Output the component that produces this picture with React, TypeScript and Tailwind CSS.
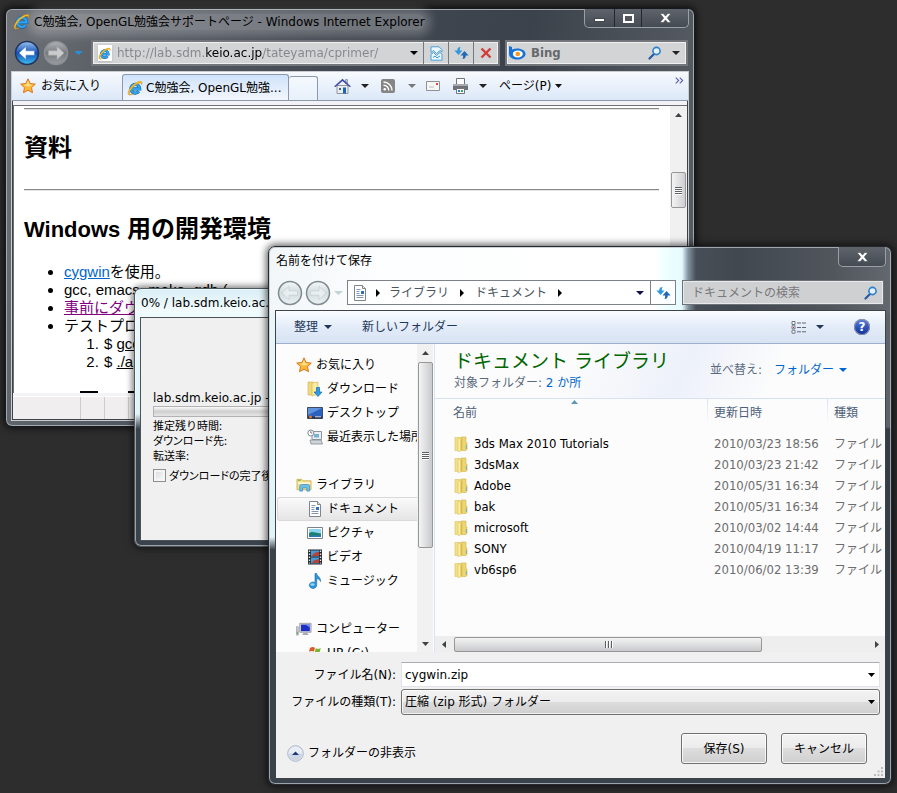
import type { ReactNode } from "react";

/* ---------- small drawings ---------- */

function IeLogo({ size = 16 }: { size?: number }) {
  return (
    <svg width={size} height={size} viewBox="0 0 16 16" className="relative shrink-0" aria-hidden="true">
      <path d="M4.500 8.800h8.200A4.400 4.400 0 1 0 11.800 11.400" fill="none" stroke="#0b5fb0" strokeWidth="3.200" />
      <path d="M4.500 8.800h8.200A4.400 4.400 0 1 0 11.800 11.400" fill="none" stroke="#2fa3ee" strokeWidth="2.200" />
      <path d="M2.200 15C.2 14.200 1 10.600 3.800 7.200 7 3.200 12 .6 14.300 1.500c1.100.5 1 2 .4 3.300.1-1.300-.4-2-1.500-1.900-2.200.2-5.400 2.200-7.900 5.200C2.900 11 1.900 13.600 2.800 14.300c.9.6 2.600-.2 4-1.200-1.600 1.500-3.500 2.400-4.600 1.900z" fill="#f7bd25" stroke="#b97c06" strokeWidth=".3" />
    </svg>
  );
}

function Star() {
  return (
    <svg width="16" height="16" viewBox="0 0 16 16" className="shrink-0" aria-hidden="true">
      <path d="M8 .8l2.100 4.700 5.200.6-3.800 3.500 1 5.100L8 12.200l-4.500 2.500 1-5.100L.7 6.100l5.200-.6z" fill="#fdb83a" stroke="#d9781e" />
      <path d="M8 2.800l1.400 3.400 3.500.5L8 8.600 3.500 6.900l3.100-.7z" fill="#ffe28c" />
    </svg>
  );
}

function Caret({ color = "#000", w = 7 }: { color?: string; w?: number }) {
  return (
    <svg width={w} height="4" viewBox="0 0 7 4" className="shrink-0" aria-hidden="true" preserveAspectRatio="none">
      <path d="M0 0h7L3.500 4z" fill={color} />
    </svg>
  );
}

function CaretRight({ color = "#000" }: { color?: string }) {
  return (
    <svg width="4" height="8" viewBox="0 0 4 8" className="shrink-0" aria-hidden="true">
      <path d="M0 0l4 4-4 4z" fill={color} />
    </svg>
  );
}

function NavBall({ dir, tone }: { dir: "back" | "next"; tone: "blue" | "grey" | "clear" }) {
  const fills = {
    blue: ["#9cc4ee", "#1450b8", "#3fc1f2", "#fff"],
    grey: ["#b0b4b8", "#777b80", "#9a9da1", "#c9cbcd"],
    clear: ["#f4f8f9", "#d3dcdf", "#eaf2f4", "#e9eef0"],
  }[tone];
  const id = `ball-${tone}`;
  return (
    <svg width="26" height="26" viewBox="0 0 26 26" className="shrink-0" aria-hidden="true">
      <defs>
        <linearGradient id={id} x1="0" y1="0" x2="0" y2="1">
          <stop offset="0" stopColor={fills[0]} />
          <stop offset=".5" stopColor={fills[1]} />
          <stop offset="1" stopColor={fills[2]} />
        </linearGradient>
      </defs>
      <circle cx="13" cy="13" r="11.5" fill={`url(#${id})`} stroke={tone === "blue" ? "#22355c" : tone === "grey" ? "#8d9196" : "#7f8b90"} strokeWidth="1.500" />
      <g transform={dir === "next" ? "matrix(-1 0 0 1 26 0)" : undefined}>
        <path d="M5 13l7-6.500v4.300h8.500v4.400H12v4.300z" fill={fills[3]} stroke={tone === "clear" ? "#c0cace" : tone === "grey" ? "#a4a7aa" : "#4c7fc6"} strokeWidth=".6" />
      </g>
    </svg>
  );
}

function RefreshArrows() {
  return (
    <svg width="15" height="14" viewBox="0 0 15 14" aria-hidden="true">
      <path d="M6.500 1C4.500 1 3.200 2 3.200 4.500H.4L4.500 9l4-4.500H5.800C5.800 3 6 1.800 6.500 1z" fill="#2f9ade" />
      <path d="M8.500 13c2 0 3.300-1 3.300-3.500h2.800L10.500 5l-4 4.500h2.700c0 1.500-.2 2.700-.7 3.500z" fill="#2468b4" />
    </svg>
  );
}

function Magnifier() {
  return (
    <svg width="14" height="14" viewBox="0 0 14 14" className="shrink-0" aria-hidden="true">
      <path d="M6 8L1.500 12.500" stroke="#2458a6" strokeWidth="2.200" strokeLinecap="round" />
      <circle cx="8.500" cy="5" r="3.600" fill="#e4f0fa" stroke="#2d7fcb" strokeWidth="1.600" />
    </svg>
  );
}

function FolderIcon() {
  return (
    <svg width="14" height="16" viewBox="0 0 14 16" className="block shrink-0" aria-hidden="true">
      <path d="M1 1.500h5v12.500l-5 .5z" fill="#f3e189" stroke="#d8bd55" strokeWidth=".6" />
      <path d="M7 1h5v6h1v6.500l-1 1H7z" fill="#ecd673" stroke="#d0b24c" strokeWidth=".6" />
      <path d="M4 3l4.500-1.500v13L4 15.500z" fill="#fbefa9" stroke="#d9bf58" strokeWidth=".6" />
      <path d="M6.500 2.800l1.500-.5v11.700l-1.500.5z" fill="#d8b93e" />
      <path d="M12.300 9v4" stroke="#5fa5c9" strokeWidth=".8" />
    </svg>
  );
}

function DocIcon() {
  return (
    <svg width="16" height="16" viewBox="0 0 16 16" className="shrink-0" aria-hidden="true">
      <path d="M2.500.5h8l3 3v12h-11z" fill="#fff" stroke="#7e858c" />
      <path d="M10.500.5v3h3" fill="#dfe5ea" stroke="#7e858c" />
      <path d="M4.500 4.500h4M4.500 6.500h3M4.500 8.500h3M4.500 10.500h7M4.500 12.500h7" stroke="#8596b4" />
      <path d="M9 6h3v3H9z" fill="#2d72b8" />
    </svg>
  );
}

function DownloadIcon() {
  return (
    <svg width="16" height="16" viewBox="0 0 16 16" className="shrink-0" aria-hidden="true">
      <path d="M1 1h5v13H1z" fill="#efd97c" stroke="#cfae48" strokeWidth=".6" />
      <path d="M5 2l6-1v12l-6 2z" fill="#faeba2" stroke="#cfae48" strokeWidth=".6" />
      <path d="M9.500 6.500h3V11H15l-4 4.500L7 11h2.500z" fill="#2e9be6" stroke="#1565ae" strokeWidth=".7" />
    </svg>
  );
}

function DesktopIcon() {
  return (
    <svg width="16" height="16" viewBox="0 0 16 16" className="shrink-0" aria-hidden="true">
      <path d="M.5 2.500h15v11H.5z" fill="#2c62bd" stroke="#3d4c66" />
      <path d="M1 3h14L1 10z" fill="#5f93de" />
      <path d="M1 11.500h14v2H1z" fill="#20304d" />
      <circle cx="3.500" cy="12" r="1.400" fill="#e8792f" />
      <path d="M8 11.800h6" stroke="#d4dbe6" />
    </svg>
  );
}

function RecentIcon() {
  return (
    <svg width="16" height="16" viewBox="0 0 16 16" className="shrink-0" aria-hidden="true">
      <path d="M5 2.500h9.500v8H5z" fill="#e8eef2" stroke="#8b979f" />
      <path d="M7 5h5v3.500H7z" fill="#78b2d0" />
      <path d="M3 11h11l1.500 4H4z" fill="#ced4d8" stroke="#858e94" strokeWidth=".8" />
      <circle cx="3.800" cy="4" r="3" fill="#fff" stroke="#808b92" />
      <path d="M3.800 2.200V4h1.500" stroke="#54606a" strokeWidth=".8" fill="none" />
    </svg>
  );
}

function LibraryIcon() {
  return (
    <svg width="16" height="16" viewBox="0 0 17 16" className="shrink-0" aria-hidden="true">
      <path d="M1 2h5l1.500 1.500H16V13H1z" fill="#f3df88" stroke="#cda94a" strokeWidth=".8" />
      <path d="M2 5h13v2H2z" fill="#fff7cf" />
      <path d="M2 3h3" stroke="#6bb04a" />
      <path d="M4 14.500V9.500C4 8 5 7.500 6 7.500h6c1.500 0 2.500.7 2.500 2v5h-3V11H7v3.500z" fill="#6cc1ea" stroke="#3c8dbd" strokeWidth=".8" />
    </svg>
  );
}

function PictureIcon() {
  return (
    <svg width="16" height="16" viewBox="0 0 16 16" className="shrink-0" aria-hidden="true">
      <path d="M.5 2.500h15v11H.5z" fill="#fff" stroke="#7c8288" />
      <path d="M2 4h12v8H2z" fill="#8fd3ee" />
      <path d="M2 8.500c3-3 5-.5 12 0V12H2z" fill="#1e8072" />
      <path d="M2 10.500h12V12H2z" fill="#2a78b8" />
    </svg>
  );
}

function VideoIcon() {
  return (
    <svg width="16" height="16" viewBox="0 0 16 16" className="shrink-0" aria-hidden="true">
      <path d="M1 .5h14v15H1z" fill="#26282b" />
      <path d="M4 1.500h8v6H4zM4 8.500h8v6H4z" fill="#4a9bd4" />
      <path d="M5 7c2-4 5-4 7-4v4zM5 14c2-4 5-3 7-4v4z" fill="#b8413a" />
      <path d="M2.500 1.500v13M13.500 1.500v13" stroke="#e4e6e8" strokeWidth="1.400" strokeDasharray="1.500 1.500" />
    </svg>
  );
}

function MusicIcon() {
  return (
    <svg width="16" height="16" viewBox="0 0 16 16" className="shrink-0" aria-hidden="true">
      <path d="M8 .5h1.500c.3 2.500 4.500 3.500 4 8-.8-2-2-2.700-3.800-3v6.300a3.700 3.200 0 1 1-1.700-2.300z" fill="#2d97dc" stroke="#1667a6" strokeWidth=".6" />
      <ellipse cx="5.500" cy="11.500" rx="2" ry="1.300" fill="#9bd6f5" />
    </svg>
  );
}

function ComputerIcon() {
  return (
    <svg width="16" height="16" viewBox="0 0 17 16" className="shrink-0" aria-hidden="true">
      <path d="M.5 5.500h2v9h-2z" fill="#c9ccd2" stroke="#8a8f97" strokeWidth=".6" />
      <path d="M1 11h1v2H1z" fill="#3fae49" />
      <path d="M4 2h12v9.500H4z" fill="#d5d8dd" stroke="#878c96" strokeWidth=".8" />
      <path d="M5.300 3.300h9.400v7H5.300z" fill="#1c2fc0" />
      <path d="M10 3.300h4.700v3z" fill="#7d92f0" />
      <path d="M8 12h4l1.500 2.500h-7z" fill="#a9adb5" />
    </svg>
  );
}

function DriveIcon() {
  return (
    <svg width="16" height="16" viewBox="0 0 16 16" className="shrink-0" aria-hidden="true">
      <path d="M3 3c2-1.500 3.500-1 5-.2L7 6.500c-1.500-.8-3-.8-5 .3z" fill="#e0562a" />
      <path d="M8.800 3.200c1.600.8 3 .8 5-.3l-1 3.800c-2 1-3.400.8-5 .1z" fill="#77b62c" />
      <path d="M1 8c2-1 4-1 5.500-.2l-1 3.700C4 10.600 2.500 10.600 0 12z" fill="#3a86d8" />
      <path d="M7.500 8c1.500.8 3 .7 5-.2l-1 3.700c-2 1-3.500.7-5 0z" fill="#f3b71b" />
    </svg>
  );
}

/* ---------- shared parts ---------- */

function VThumbGrip() {
  return (
    <span className="flex flex-col gap-px">
      {[0, 1, 2, 3].map((n) => (
        <span key={n} className="h-px w-[7px] bg-[#5c5f63] shadow-[0_1px_0_#fff]" />
      ))}
    </span>
  );
}

function TriUp() {
  return (
    <svg width="7" height="4" viewBox="0 0 7 4" aria-hidden="true">
      <path d="M0 4h7L3.500 0z" fill="#3f4347" />
    </svg>
  );
}

function CloseGlyph() {
  return (
    <svg width="11" height="10" viewBox="0 0 11 10" aria-hidden="true">
      <path d="M0 .5h3.300l2.200 2.600L7.700.5H11L7.300 5 11 9.500H7.700L5.500 6.900 3.300 9.500H0L3.700 5z" fill="#fff" stroke="#3a3e43" strokeWidth=".5" />
    </svg>
  );
}

function SideItem({ icon, label, child, active }: { icon: ReactNode; label: string; child?: boolean; active?: boolean }) {
  return (
    <li>
      <a
        href="#"
        className={`flex h-6 items-center gap-1 whitespace-nowrap ${child ? "pl-[29px]" : "pl-[18px]"} ${
          active ? "rounded-l-[3px] border border-r-0 border-[#d9d9d9] bg-linear-to-b from-[#fafafa] to-[#e5e5e5]" : "border border-transparent"
        }`}
      >
        {icon}
        <span>{label}</span>
      </a>
    </li>
  );
}

const folders = [
  { name: "3ds Max 2010 Tutorials", date: "2010/03/23 18:56" },
  { name: "3dsMax", date: "2010/03/23 21:42" },
  { name: "Adobe", date: "2010/05/31 16:34" },
  { name: "bak", date: "2010/05/31 16:34" },
  { name: "microsoft", date: "2010/03/02 14:44" },
  { name: "SONY", date: "2010/04/19 11:17" },
  { name: "vb6sp6", date: "2010/06/02 13:39" },
];

/* ---------- browser window ---------- */

function BrowserWindow() {
  return (
    <section className="absolute top-2 left-[5px] flex h-[419px] w-[690px] flex-col rounded-[7px] border border-[#16191d] bg-[linear-gradient(100deg,#6f7379_0px,#5d6269_90px,#434952_330px,#3c424b_520px,#565b62_690px)] px-[5px] pb-[5px] shadow-[inset_0_0_0_1px_#a3a8ad,0_0_6px_2px_rgba(0,0,0,.6)]">
      <header className="flex h-[31px] items-start justify-between pl-[2px]">
        <h1 className="flex h-[25px] items-center gap-[4px] text-black">
          <IeLogo size={17} />
          <span className="rounded-full bg-white/25 leading-4 whitespace-nowrap shadow-[0_0_8px_6px_rgba(255,255,255,.22)]">
            C勉強会, OpenGL勉強会サポートページ - Windows Internet Explorer
          </span>
        </h1>
        <div className="flex h-[19px] shrink-0 divide-x divide-[#24282d] rounded-b-[5px] border border-t-0 border-[#9a9fa5] bg-linear-to-b from-[#5f646b] to-[#454b53]">
          <button aria-label="最小化" className="flex w-[30px] items-end justify-center pb-[5px]">
            <span className="h-[4px] w-[11px] border border-[#44484d] bg-white" />
          </button>
          <button aria-label="最大化" className="flex w-[27px] items-center justify-center">
            <span className="h-[9px] w-[11px] border-2 border-white" />
          </button>
          <button aria-label="閉じる" className="flex w-[46px] items-center justify-center">
            <CloseGlyph />
          </button>
        </div>
      </header>

      <div className="flex h-[31px] items-start gap-[5px] pr-px pl-[3px]">
        <div className="flex items-center">
          <button aria-label="戻る"><NavBall dir="back" tone="blue" /></button>
          <button aria-label="進む" className="ml-[3px]"><NavBall dir="next" tone="grey" /></button>
          <button aria-label="履歴" className="ml-[5px] flex h-6 items-center"><Caret color="#2b8fd8" w={9} /></button>
        </div>
        <div className="ml-[3px] flex h-[26px] flex-1 items-stretch border-2 border-[#73777c] bg-[#d3d4d5] shadow-[inset_0_0_0_1px_#f0f0f0]">
          <span className="flex w-[24px] items-center justify-center">
            <span className="flex h-4 w-[14px] items-center bg-white shadow"><IeLogo size={13} /></span>
          </span>
          <input
            aria-label="アドレス"
            readOnly
            defaultValue="http://lab.sdm.keio.ac.jp/tateyama/cprimer/"
            className="min-w-0 flex-1 bg-[linear-gradient(90deg,#84868a_89px,#000_89px,#000_146px,#84868a_146px)] bg-clip-text text-[12px] leading-5 text-transparent outline-none"
          />
          <button aria-label="アドレス一覧" className="flex w-[19px] items-center justify-center"><Caret w={8} /></button>
          <button aria-label="互換表示" className="flex w-[25px] items-center justify-center border-l border-[#76797d]">
            <svg width="13" height="15" viewBox="0 0 13 15" aria-hidden="true">
              <path d="M1 .8h8l3 3V6l-2-1.500-3.500 3-3-3L1 6.500z" fill="#eaf6fd" stroke="#3a9bd6" strokeWidth=".9" />
              <path d="M1 8.500l2.500-2 3 3 3.500-3 2 1.700v6H1z" fill="#eaf6fd" stroke="#3a9bd6" strokeWidth=".9" />
              <path d="M3 11.500l2-1.500 2 2 3-2" fill="none" stroke="#3a9bd6" />
            </svg>
          </button>
          <button aria-label="更新" className="flex w-[25px] items-center justify-center border-l border-[#76797d]"><RefreshArrows /></button>
          <button aria-label="中止" className="flex w-[25px] items-center justify-center border-l border-[#76797d]">
            <svg width="12" height="12" viewBox="0 0 12 12" aria-hidden="true">
              <path d="M1.500 1.500l9 9M10.500 1.500l-9 9" stroke="#cf3f3b" strokeWidth="2.400" />
            </svg>
          </button>
        </div>
        <div className="flex h-[26px] w-[183px] items-center border-2 border-[#73777c] bg-[#d3d4d5] pr-[6px] pl-[2px] shadow-[inset_0_0_0_1px_#f0f0f0]">
          <svg width="17" height="14" viewBox="0 0 17 14" className="shrink-0" aria-hidden="true">
            <path d="M0 0l3 1v2.500C10 1 17 4 16.500 8.500 16 13 7 15.500 1.800 11.500.3 10.300 0 9 0 7z" fill="#1673d6" />
            <ellipse cx="8.800" cy="8" rx="5" ry="3.400" fill="#fff" />
            <circle cx="8.800" cy="8" r="2.300" fill="#f49b1b" />
          </svg>
          <input aria-label="検索" placeholder="Bing" className="ml-[5px] min-w-0 flex-1 text-[13px] leading-5 font-bold outline-none [font-family:'DejaVu_Sans_Condensed',sans-serif] placeholder:text-[#66686b]" />
          <button aria-label="検索する"><Magnifier /></button>
          <button aria-label="検索オプション" className="ml-[10px]"><Caret color="#222" w={8} /></button>
        </div>
      </div>

      <div className="flex min-h-0 flex-1 flex-col border border-[#c9ccd0] bg-[#f2f2f7] shadow-[inset_0_0_0_1px_#3d4249]">
        <nav className="flex h-[29px] items-end border-b border-[#8d99ab] bg-linear-to-b from-[#f7fafe] to-[#dce8f8] px-px">
          <a href="#" className="flex h-[28px] w-[109px] items-center gap-[5px] pl-[7px] whitespace-nowrap">
            <Star />お気に入り
          </a>
          <a href="#" className="flex h-[26px] w-[167px] items-center gap-[3px] rounded-t-[3px] border border-b-0 border-[#8d99ab] bg-linear-to-b from-[#d0e3fb] to-[#f2f6fc] pl-[4px] whitespace-nowrap">
            <IeLogo />C勉強会, OpenGL勉強...
          </a>
          <button aria-label="新しいタブ" className="h-[24px] w-[29px] rounded-t-[3px] border border-b-0 border-l-0 border-[#8d99ab] bg-linear-to-b from-[#f5f9fe] to-[#e8f0fa]" />
          <div className="ml-4 flex h-[28px] flex-1 items-center">
            <button aria-label="ホーム">
              <svg width="17" height="16" viewBox="0 0 17 16" aria-hidden="true">
                <path d="M3 7.500h11v8H3z" fill="#e9edf2" stroke="#7a828c" strokeWidth=".8" />
                <path d="M11.500 1.500h2v4h-2z" fill="#b9bfc8" stroke="#6a7280" strokeWidth=".5" />
                <path d="M0 8.500L8.500.8 17 8.500l-1.500.5-7-6-7 6z" fill="#3c49a8" />
                <path d="M9 9.500h3v6H9z" fill="#1f62ae" />
                <path d="M5 10h2v2H5z" fill="#49627f" />
              </svg>
            </button>
            <span className="ml-[10px] flex"><Caret color="#222" w={8} /></span>
            <button aria-label="フィード" className="ml-[12px]">
              <svg width="14" height="14" viewBox="0 0 14 14" aria-hidden="true">
                <rect width="14" height="14" rx="2" fill="#858585" />
                <circle cx="3.800" cy="10.300" r="1.300" fill="#fff" />
                <path d="M2.500 6.200a5.300 5.300 0 0 1 5.300 5.300M2.500 3a8.500 8.500 0 0 1 8.500 8.500" stroke="#fff" strokeWidth="1.400" fill="none" />
              </svg>
            </button>
            <span className="ml-[13px] flex"><Caret color="#777" w={8} /></span>
            <button aria-label="メール" className="ml-[10px]">
              <svg width="14" height="10" viewBox="0 0 14 10" aria-hidden="true">
                <path d="M.5.5h13v9H.5z" fill="#f6f6f4" stroke="#8e9196" />
                <path d="M10 2h2v2h-2z" fill="#d6493f" />
                <path d="M3 6h5" stroke="#b8bcc2" />
              </svg>
            </button>
            <button aria-label="印刷" className="ml-[12px]">
              <svg width="17" height="16" viewBox="0 0 17 16" aria-hidden="true">
                <path d="M4.500.5h8v6h-8z" fill="#fff" stroke="#70757b" />
                <path d="M1 6h15v6H1z" fill="#6e7276" />
                <path d="M1 6h15v2H1z" fill="#a7abb0" />
                <path d="M4.500 10.500h8v5h-8z" fill="#fff" stroke="#70757b" />
                <path d="M6 12h2v2H6z" fill="#2b78c8" />
                <path d="M9 12h2v2H9z" fill="#3fa04a" />
              </svg>
            </button>
            <span className="ml-[10px] flex"><Caret color="#222" w={8} /></span>
            <button className="ml-[12px] flex items-center gap-1 whitespace-nowrap">
              ページ(P)<Caret color="#111" />
            </button>
            <button aria-label="その他" className="mr-[3px] mb-[12px] ml-auto">
              <svg width="9" height="7" viewBox="0 0 9 7" aria-hidden="true">
                <path d="M.7.7l3 2.800-3 2.800M4.700.7l3 2.800-3 2.800" fill="none" stroke="#5a5fae" strokeWidth="1.100" />
              </svg>
            </button>
          </div>
        </nav>

        <div className="mx-px mt-[4px] flex min-h-0 flex-1 border-t border-l border-[#6b6f75] bg-white">
          <article className="min-w-0 flex-1 overflow-hidden pr-[11px] pl-[10px] text-[15px] leading-[18px] [font-family:'Liberation_Sans','Noto_Sans_CJK_JP',sans-serif]">
            <hr className="mt-[2px] border-t border-b border-t-[#8a8a8a] border-b-[#e3e3e3]" />
            <h2 className="mt-[22px] text-[24px] leading-[32px] font-bold">資料</h2>
            <hr className="mt-[25px] border-t border-b border-t-[#8a8a8a] border-b-[#e3e3e3]" />
            <h2 className="mt-[22px] text-[24px] leading-[32px] font-bold whitespace-nowrap">
              <span className="text-[22px]">Windows</span> 用の開発環境
            </h2>
            <ul className="mt-[17px] list-disc pl-[40px] whitespace-nowrap">
              <li><a href="#" className="text-[#0066cc] underline">cygwin</a>を使用。</li>
              <li>gcc, emacs, make, gdb (</li>
              <li><a href="#" className="text-[#800080] underline">事前にダウンロード</a></li>
              <li>
                テストプログラム
                <ol className="list-decimal pl-[39px]">
                  <li className="pl-[1px]">$ <u>gcc</u></li>
                  <li className="pl-[1px]">$ <u>./a</u></li>
                </ol>
              </li>
            </ul>
            <div className="mt-[20px] flex gap-[30px] pl-[56px]">
              <span className="h-[2px] w-[18px] bg-black" />
              <span className="h-[2px] w-[18px] bg-black" />
            </div>
          </article>
          <div className="flex w-[17px] flex-col items-center bg-[#f0f0f0]" aria-hidden="true">
            <span className="mt-[7px] flex"><TriUp /></span>
            <span className="mt-[55px] flex h-[36px] w-[15px] items-center justify-center rounded-[2px] border border-[#979797] bg-linear-to-r from-[#f4f4f4] to-[#cfcfd1]">
              <VThumbGrip />
            </span>
          </div>
        </div>

        <footer className="mx-px mt-[3px] mb-px flex h-[23px] divide-x divide-[#cfcccc] border-t border-white bg-[#f0eeee]">
          <span className="w-[68px]" />
          <span className="w-6" />
          <span className="w-6" />
          <span className="flex-1" />
        </footer>
      </div>
    </section>
  );
}

/* ---------- download progress window ---------- */

function DownloadWindow() {
  return (
    <section className="absolute top-[288px] left-[134px] flex h-[259px] w-[300px] flex-col rounded-[7px] border border-[#4d575e] bg-[linear-gradient(180deg,#d9eef6_0px,#f1fbfd_20px,#e6f6fa_60px,#e2f3f8_125px,#39414b_140px,#3a424c_100%)] px-[5px] pb-[5px] shadow-[inset_0_0_0_1px_rgba(255,255,255,.5),0_0_6px_2px_rgba(0,0,0,.5)]">
      <h2 className="h-[28px] pl-px leading-[28px] whitespace-nowrap">0% / lab.sdm.keio.ac.jp</h2>
      <div className="flex-1 border border-[#4b5258] bg-[#f0f0f0] pt-[72px] pl-[12px]">
        <p className="leading-4 whitespace-nowrap">lab.sdm.keio.ac.jp -</p>
        <div className="h-[11px] border border-[#b2b2b2] bg-linear-to-b from-[#fbfbfb] via-[#cfcfcf] to-[#e6e6e6]" role="progressbar" aria-label="進行状況" />
        <div className="pt-px text-[11px] leading-[15px] whitespace-nowrap [font-family:'Noto_Sans_CJK_JP',sans-serif]">
          <p>推定残り時間:</p>
          <p className="[font-feature-settings:'palt']">ダウンロード先:</p>
          <p>転送率:</p>
          <label className="mt-[5px] flex items-center gap-[3px] [font-feature-settings:'palt']">
            <input type="checkbox" className="size-[13px] appearance-none border border-[#8e8f8f] bg-linear-to-br from-[#d3d6da] to-white shadow-[inset_0_0_0_2px_#f4f4f4]" />
            ダウンロードの完了後
          </label>
        </div>
      </div>
    </section>
  );
}

/* ---------- save dialog ---------- */

function SaveDialog() {
  return (
    <section className="absolute top-[246px] left-[268px] flex h-[539px] w-[624px] flex-col rounded-[7px] border border-[#25292e] bg-[linear-gradient(90deg,#f2f6f8_0px,#fdfeff_120px,#ffffff_340px,#ffffff_385px,#f0ffff_395px,#e6fafe_413px,#8494a2_419px,#474e57_427px,#42484f_470px,#50555c_560px,#646970_624px),linear-gradient(180deg,#eaf7fb_0px,#e2f3f8_290px,#39414b_303px,#39414b_100%),linear-gradient(180deg,#5d6268_0px,#5d6268_180px,#353c45_182px,#3a424c_100%)] bg-size-[100%_66px,9px_100%,100%_100%] bg-no-repeat pr-[5px] pb-[5px] pl-[6px] shadow-[inset_0_0_0_1px_rgba(190,196,202,.75),0_0_7px_2px_rgba(0,0,0,.6)]">
      <header className="flex h-[33px] items-start justify-between">
        <h2 className="pl-px leading-[28px]">名前を付けて保存</h2>
        <button aria-label="閉じる" className="flex h-[20px] w-[48px] items-center justify-center rounded-b-[5px] border border-t-0 border-[#9a9fa5] bg-linear-to-b from-[#5f646b] to-[#454b53]">
          <CloseGlyph />
        </button>
      </header>

      <div className="flex h-[30px] items-start pr-[2px] pl-[2px]">
        <button aria-label="戻る"><NavBall dir="back" tone="clear" /></button>
        <button aria-label="進む" className="ml-[2px]"><NavBall dir="next" tone="clear" /></button>
        <span className="mt-[11px] ml-[3px]"><Caret color="#c3d3d6" w={9} /></span>
        <div className="ml-[4px] flex h-[25px] flex-1 items-center border border-[#7c8287] bg-white/80 pl-[4px] text-[#4a5560]">
          <DocIcon />
          <span className="mx-[8px] flex"><CaretRight /></span>
          <a href="#" className="ml-px whitespace-nowrap">ライブラリ</a>
          <span className="mx-[11px] flex"><CaretRight /></span>
          <a href="#" className="whitespace-nowrap">ドキュメント</a>
          <span className="mx-[11px] flex"><CaretRight /></span>
          <button aria-label="場所の一覧" className="mr-[6px] ml-auto"><Caret color="#101050" w={8} /></button>
          <button aria-label="更新" className="flex h-full w-[25px] items-center justify-center border-l border-[#7c8287]"><RefreshArrows /></button>
        </div>
        <div className="ml-[6px] flex h-[25px] w-[202px] items-center border border-[#6d7278] bg-[#cfd0d1] pr-[5px] pl-[9px] shadow-[inset_0_0_0_1px_#e8e9ea]">
          <input aria-label="ドキュメントの検索" placeholder="ドキュメントの検索" className="min-w-0 flex-1 outline-none placeholder:text-[#77797c]" />
          <button aria-label="検索"><Magnifier /></button>
        </div>
      </div>

      <div className="flex min-h-0 flex-1 flex-col border border-[#3d4349] bg-[#f0f0f0]">
        <div className="flex h-[33px] shrink-0 items-center border-b border-[#9fb0cc] bg-linear-to-b from-[#fbfdff] via-[#e3ecf8] to-[#d7e3f4] pl-[18px] text-[#1e395b]">
          <button className="flex items-center gap-[6px]">整理<Caret color="#1e395b" w={8} /></button>
          <button className="ml-[30px]">新しいフォルダー</button>
          <button aria-label="表示方法" className="ml-auto flex items-center gap-[9px]">
            <svg width="16" height="13" viewBox="0 0 16 13" aria-hidden="true">
              <path d="M1 .5h3v3H1zM1 4.800h3v3H1zM1 9.200h3v3H1z" fill="#fff" stroke="#6f7780" />
              <path d="M2 6h1v1H2z" fill="#d23" />
              <path d="M6 2h4M11 2h4M6 6.500h4M11 6.500h4M6 10.800h4M11 10.800h4" stroke="#5f6872" />
            </svg>
            <Caret color="#1e395b" w={8} />
          </button>
          <button aria-label="ヘルプ" className="mr-[15px] ml-[30px] flex size-4 items-center justify-center rounded-full bg-linear-to-b from-[#5a80e0] to-[#0c2b9c] text-[12px] leading-4 font-bold text-white ring-1 ring-[#8c93a5] ring-inset">
            ?
          </button>
        </div>

        <div className="flex h-[308px] shrink-0 bg-[#fcfcfc]">
          <nav className="w-[141px] shrink-0 overflow-hidden pt-[9px] pl-px">
            <ul>
              <SideItem icon={<Star />} label="お気に入り" />
              <SideItem child icon={<DownloadIcon />} label="ダウンロード" />
              <SideItem child icon={<DesktopIcon />} label="デスクトップ" />
              <SideItem child icon={<RecentIcon />} label="最近表示した場所" />
            </ul>
            <ul className="mt-6">
              <SideItem icon={<LibraryIcon />} label="ライブラリ" />
              <SideItem child active icon={<DocIcon />} label="ドキュメント" />
              <SideItem child icon={<PictureIcon />} label="ピクチャ" />
              <SideItem child icon={<VideoIcon />} label="ビデオ" />
              <SideItem child icon={<MusicIcon />} label="ミュージック" />
            </ul>
            <ul className="mt-6">
              <SideItem icon={<ComputerIcon />} label="コンピューター" />
              <SideItem child icon={<DriveIcon />} label="HP (C:)" />
            </ul>
          </nav>
          <div className="flex w-[16px] shrink-0 flex-col items-center bg-[#f1f1f1]" aria-hidden="true">
            <span className="mt-[7px] flex"><TriUp /></span>
            <span className="mt-[7px] flex h-[186px] w-[15px] items-center justify-center rounded-[2px] border border-[#979797] bg-linear-to-r from-[#f4f4f4] to-[#c9cacc]">
              <VThumbGrip />
            </span>
            <span className="mt-auto mb-[6px] flex"><Caret color="#3f4347" /></span>
          </div>

          <div className="ml-px flex min-w-0 flex-1 flex-col border-l border-[#d6e5f5]">
            <div className="flex h-[54px] items-start bg-[linear-gradient(115deg,#fcfcfc_30%,#edf1fa_55%,#fcfcfc_75%)] pr-[38px] pl-[19px]">
              <div className="whitespace-nowrap">
                <h3 className="pt-[3px] text-[19px] leading-[28px] text-[#006600]">ドキュメント ライブラリ</h3>
                <p className="leading-4 text-[#5a6a7d]">対象フォルダー: <a href="#" className="text-[#0066cc]">2 か所</a></p>
              </div>
              <div className="ml-auto flex items-center pt-[18px] leading-4 whitespace-nowrap text-[#5a6a7d]">
                並べ替え:
                <button className="ml-[12px] flex items-center gap-[5px] text-[#0066cc]">フォルダー<Caret color="#0066cc" w={8} /></button>
              </div>
            </div>
            <div className="flex-1 overflow-hidden">
              <table className="w-full table-fixed border-t border-[#d6e3f5] text-left">
                <colgroup>
                  <col />
                  <col className="w-[120px]" />
                  <col className="w-[58px]" />
                </colgroup>
                <thead>
                  <tr className="h-[35px] align-top text-[#4c607a]">
                    <th scope="col" className="relative pl-[18px] leading-[29px] font-normal">
                      名前
                      <span className="absolute top-px left-1/2 flex"><svg width="7" height="4" viewBox="0 0 7 4" aria-hidden="true"><path d="M0 4h7L3.500 0z" fill="#5f95b5" /></svg></span>
                    </th>
                    <th scope="col" className="bg-linear-to-b from-[#d6e3f5] to-transparent bg-size-[1px_26px] bg-no-repeat pl-[7px] leading-[29px] font-normal">更新日時</th>
                    <th scope="col" className="bg-linear-to-b from-[#d6e3f5] to-transparent bg-size-[1px_26px] bg-no-repeat pl-[7px] leading-[29px] font-normal">種類</th>
                  </tr>
                </thead>
                <tbody>
                  {folders.map((f) => (
                    <tr key={f.name} className="h-[21px] leading-5 whitespace-nowrap">
                      <td className="pl-[19px] text-[13px] [font-family:'DejaVu_Sans_Condensed',sans-serif]">
                        <span className="flex items-center gap-[6px]"><FolderIcon />{f.name}</span>
                      </td>
                      <td className="pl-[7px] text-[13px] text-[#6d6d6d] [font-family:'DejaVu_Sans_Condensed',sans-serif]">{f.date}</td>
                      <td className="pl-[7px] text-[#6d6d6d]">ファイル</td>
                    </tr>
                  ))}
                </tbody>
              </table>
            </div>
            <div className="flex h-[16px] shrink-0 items-center justify-between bg-[#eeeeee] pr-[6px] pl-[7px]" aria-hidden="true">
              <svg width="4" height="7" viewBox="0 0 4 7"><path d="M4 0v7L0 3.500z" fill="#3f4347" /></svg>
              <span className="mr-auto ml-[8px] flex h-[15px] w-[308px] items-center justify-center gap-[2px] rounded-[2px] border border-[#979797] bg-linear-to-b from-[#f4f4f4] to-[#c9cacc]">
                {[0, 1, 2].map((n) => (
                  <span key={n} className="h-[7px] w-px bg-[#5c5f63] shadow-[1px_0_0_#fff]" />
                ))}
              </span>
              <svg width="4" height="7" viewBox="0 0 4 7"><path d="M0 0v7l4-3.500z" fill="#3f4347" /></svg>
            </div>
          </div>
        </div>

        <form className="flex flex-1 flex-col pt-[10px] pr-[5px]" onSubmit={(e) => e.preventDefault()}>
          <div className="grid grid-cols-[120px_1fr] items-center gap-x-[5px] gap-y-[2px] whitespace-nowrap">
            <label htmlFor="file-name" className="text-right">ファイル名(N):</label>
            <div className="flex h-[25px] items-center border border-[#e2e3ea] border-t-[#abadb3] bg-white pr-[4px]">
              <input id="file-name" defaultValue="cygwin.zip" className="min-w-0 flex-1 pl-[3px] outline-none" />
              <Caret />
            </div>
            <label htmlFor="file-type" className="text-right">ファイルの種類(T):</label>
            <div className="flex h-[26px] items-center rounded-[3px] border border-[#707070] bg-[linear-gradient(180deg,#f3f3f3_0%,#ebebeb_50%,#dddddd_50%,#cfcfcf_100%)] pr-[4px] shadow-[inset_0_0_0_1px_rgba(255,255,255,.7)]">
              <select id="file-type" className="min-w-0 flex-1 appearance-none pl-[3px] outline-none">
                <option>圧縮 (zip 形式) フォルダー</option>
              </select>
              <Caret />
            </div>
          </div>
          <div className="mt-[18px] flex items-center pr-[13px] pl-[11px]">
            <button type="button" className="mt-[9px] flex items-center gap-[4px]">
              <svg width="17" height="17" viewBox="0 0 17 17" aria-hidden="true">
                <circle cx="8.500" cy="8.500" r="7.800" fill="#e9eef5" stroke="#a9b4c8" />
                <path d="M1.500 8.500a7 7 0 0 0 14 0z" fill="#cdd6e3" />
                <path d="M5 10h7L8.500 6.500z" fill="#1b3a78" />
              </svg>
              フォルダーの非表示
            </button>
            <button type="submit" className="ml-auto h-[31px] w-[86px] rounded-[3px] border border-[#707070] bg-[linear-gradient(180deg,#f3f3f3_0%,#ebebeb_50%,#dddddd_50%,#cfcfcf_100%)] shadow-[inset_0_0_0_1px_rgba(255,255,255,.8)]">保存(S)</button>
            <button type="button" className="ml-[14px] h-[31px] w-[86px] rounded-[3px] border border-[#707070] bg-[linear-gradient(180deg,#f3f3f3_0%,#ebebeb_50%,#dddddd_50%,#cfcfcf_100%)] shadow-[inset_0_0_0_1px_rgba(255,255,255,.8)]">キャンセル</button>
          </div>
          <svg width="9" height="9" viewBox="0 0 9 9" className="mt-auto mr-[-3px] mb-[2px] ml-auto" aria-hidden="true">
            <path d="M7 0h2v2H7zM7 3.500h2v2H7zM7 7h2v2H7zM3.500 3.500h2v2h-2zM3.500 7h2v2h-2zM0 7h2v2H0z" fill="#b9bbbe" />
          </svg>
        </form>
      </div>
    </section>
  );
}

export default function App() {
  return (
    <main className="relative min-h-screen overflow-hidden bg-[#2d2d2d] text-[12px] leading-4 text-black [font-family:'DejaVu_Sans','Noto_Sans_CJK_JP',sans-serif]">
      <BrowserWindow />
      <DownloadWindow />
      <SaveDialog />
    </main>
  );
}
